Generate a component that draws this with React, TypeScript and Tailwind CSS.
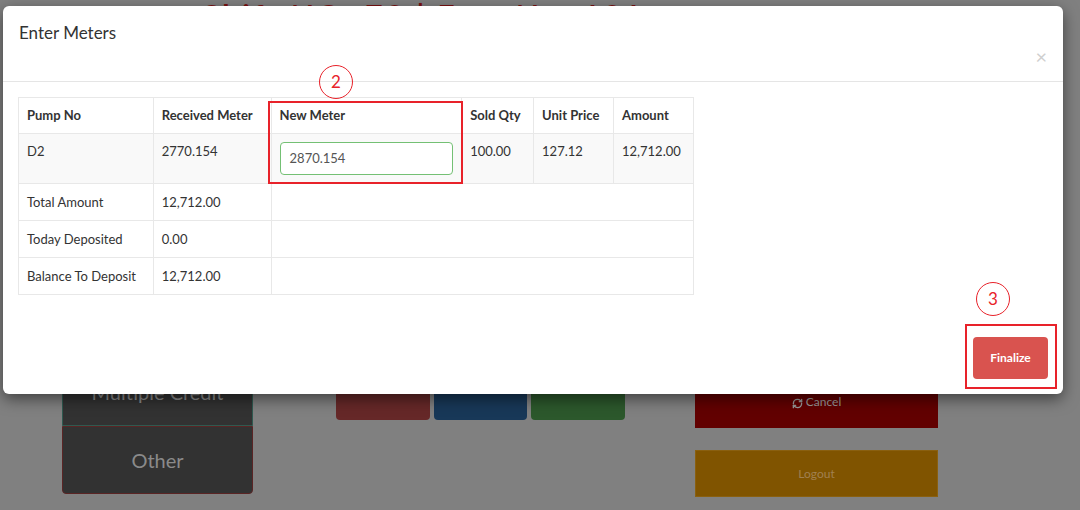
import React from "react";
import { RefreshCw } from "lucide-react";

const font = { fontFamily: "Lato, 'Noto Sans', sans-serif" };

const summary = [
  { label: "Total Amount", value: "12,712.00" },
  { label: "Today Deposited", value: "0.00" },
  { label: "Balance To Deposit", value: "12,712.00" },
];

function Backdrop() {
  return (
    <div className="absolute inset-0 bg-[#808080]">
      <div className="flex pl-[203px]">
        <h1 className="mt-[0px] text-[30px] leading-none font-bold tracking-[3px] text-[#7a1010]">
          Shift NO: 72 | Emp No: 121
        </h1>
      </div>
      <div className="flex pt-[310px] pl-[62px]">
        <div className="flex w-[191px] flex-col">
          <div className="flex h-[86px] items-end justify-center rounded-t-[4px] border border-[#2f5a50] bg-[#323232] pb-[18px] text-[20px] text-[#8a8a8a]">
            Multiple Credit
          </div>
          <div className="flex h-[68px] items-center justify-center rounded-b-[4px] border border-[#5a2525] bg-[#323232] text-[20px] text-[#8a8a8a]">
            Other
          </div>
        </div>
        <div className="ml-[83px] flex gap-[4px] pt-[30px]">
          <div className="h-[50px] w-[94px] rounded-[4px] bg-[#662828]" />
          <div className="h-[50px] w-[93px] rounded-[4px] bg-[#183858]" />
          <div className="h-[50px] w-[94px] rounded-[4px] bg-[#2c582c]" />
        </div>
        <div className="ml-[70px] flex w-[243px] flex-col gap-[22px] pt-[28px]">
          <div className="flex h-[60px] items-end justify-center gap-[3px] bg-[#620000] pb-[17px] text-[12px] text-[#9a9a9a]">
            <RefreshCw className="mb-[2px] h-[11px] w-[11px]" strokeWidth={3} />
            Cancel
          </div>
          <div className="flex h-[47px] items-center justify-center border border-[#8a6010] bg-[#805400] text-[12px] text-[#a08050]">
            Logout
          </div>
        </div>
      </div>
    </div>
  );
}

function Modal() {
  return (
    <div className="absolute left-[3px] top-[6px] flex h-[388px] w-[1060px] flex-col rounded-[6px] bg-white shadow-[0_5px_15px_rgba(0,0,0,0.5)]">
      <div className="flex flex-col border-b border-[#e5e5e5] px-[16px] pt-[15px] pb-[15px]">
        <h4 className="text-[17px] leading-[24px] text-[#333]">Enter Meters</h4>
        <div className="flex h-[21px] items-center justify-end pr-[0px] text-[20px] leading-none text-[#cfcfcf]">
          &times;
        </div>
      </div>
      <div className="flex flex-1 flex-col p-[15px]">
        <table className="w-[676px] border-collapse border border-[#e8e8e8] text-[13px] leading-[19px] text-[#333]">
          <thead>
            <tr className="h-[36px] text-left">
              <th className="w-[135px] border border-[#e8e8e8] px-[8px] align-middle font-bold">Pump No</th>
              <th className="w-[118px] border border-[#e8e8e8] px-[8px] font-bold">Received Meter</th>
              <th className="w-[191px] border border-[#e8e8e8] px-[8px] font-bold">New Meter</th>
              <th className="w-[72px] border border-[#e8e8e8] px-[8px] font-bold">Sold Qty</th>
              <th className="w-[80px] border border-[#e8e8e8] px-[8px] font-bold">Unit Price</th>
              <th className="w-[80px] border border-[#e8e8e8] px-[8px] font-bold">Amount</th>
            </tr>
          </thead>
          <tbody>
            <tr className="bg-[#f9f9f9] align-top">
              <td className="border border-[#e8e8e8] p-[8px]">D2</td>
              <td className="border border-[#e8e8e8] p-[8px]">2770.154</td>
              <td className="border border-[#e8e8e8] p-[8px]">
                <div className="flex h-[33px] w-full items-center rounded-[4px] border border-[#74c074] bg-white px-[9px] text-[#555]">
                  2870.154
                </div>
              </td>
              <td className="border border-[#e8e8e8] p-[8px]">100.00</td>
              <td className="border border-[#e8e8e8] p-[8px]">127.12</td>
              <td className="border border-[#e8e8e8] p-[8px]">12,712.00</td>
            </tr>
            {summary.map((row) => (
              <tr key={row.label} className="h-[37px]">
                <td className="border border-[#e8e8e8] px-[8px]">{row.label}</td>
                <td className="border border-[#e8e8e8] px-[8px]">{row.value}</td>
                <td colSpan={4} className="border border-[#e8e8e8] px-[8px]" />
              </tr>
            ))}
          </tbody>
        </table>
        <div className="mt-auto flex justify-end">
          <button className="h-[42px] w-[75px] rounded-[4px] bg-[#d9534f] text-[12px] font-bold text-white">
            Finalize
          </button>
        </div>
      </div>
    </div>
  );
}

function Marker({ n, className }: { n: string; className: string }) {
  return (
    <div
      className={`absolute flex h-[34px] w-[34px] items-center justify-center rounded-full border-[1.5px] border-[#e8222a] text-[17px] text-[#e8222a] ${className}`}
    >
      {n}
    </div>
  );
}

export default function App() {
  return (
    <div className="relative h-[510px] w-[1080px] overflow-hidden" style={font}>
      <Backdrop />
      <Modal />
      <div className="absolute left-[268px] top-[101px] h-[83px] w-[195px] border-2 border-[#e8222a]" />
      <Marker n="2" className="left-[319px] top-[65px]" />
      <div className="absolute left-[965px] top-[324px] h-[65px] w-[92px] border-2 border-[#e8222a]" />
      <Marker n="3" className="left-[976px] top-[282px]" />
    </div>
  );
}
